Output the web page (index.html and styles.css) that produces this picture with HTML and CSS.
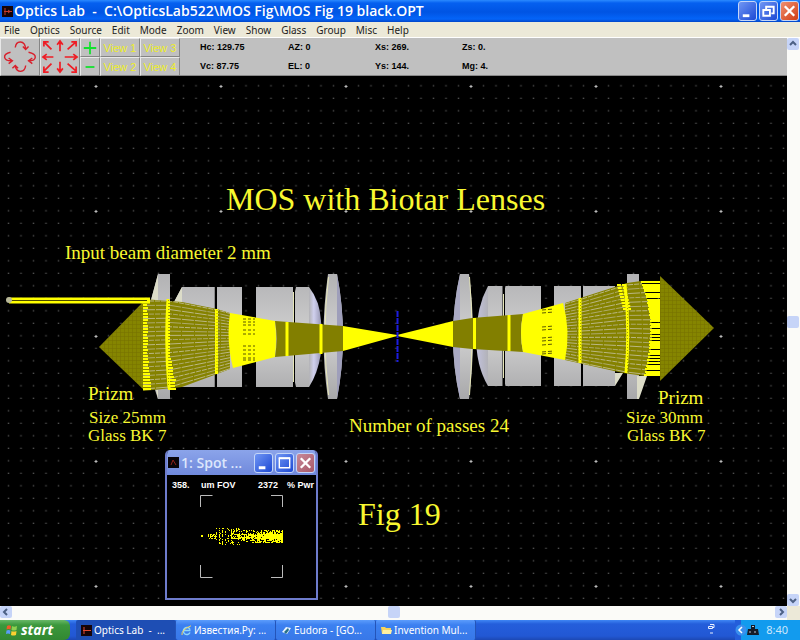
FILE: index.html
```html
<!DOCTYPE html>
<html lang="en">
<head>
<meta charset="utf-8">
<title>Optics Lab</title>
<link rel="stylesheet" href="styles.css">
</head>
<body>
<div class="desktop">
  <header class="titlebar">
    <svg class="app-icon" viewBox="0 0 11 11"><rect width="11" height="11" fill="#160408"/><path d="M3 2v7M2 5.500h8M6 4l2 1.500-2 1.500" stroke="#c43a2c" fill="none"/></svg>
    <h1>Optics Lab&nbsp; -&nbsp; C:\OpticsLab522\MOS Fig\MOS Fig 19 black.OPT</h1>
    <div class="window-buttons">
      <button class="win" aria-label="Minimize"><svg viewBox="0 0 18 18"><path d="M4 14h7" stroke="#fff" stroke-width="3"/></svg></button>
      <button class="win" aria-label="Restore"><svg viewBox="0 0 18 18"><path d="M6.500 7V4.500h8v7H12M6 4.500h9" fill="none" stroke="#fff" stroke-width="2"/><path d="M3.500 8h7v6h-7z" fill="none" stroke="#fff" stroke-width="2"/></svg></button>
      <button class="win close" aria-label="Close"><svg viewBox="0 0 18 18"><path d="M4 4l10 10M14 4L4 14" stroke="#fff" stroke-width="2.500"/></svg></button>
    </div>
  </header>
  <nav class="menu">
    <button>File</button><button>Optics</button><button>Source</button><button>Edit</button><button>Mode</button><button>Zoom</button><button>View</button><button>Show</button><button>Glass</button><button>Group</button><button>Misc</button><button>Help</button>
  </nav>
  <main class="work">
    <section class="toolbar">
      <div class="tools">
        <button class="tall" aria-label="Rotate"><svg viewBox="0 0 40 38" fill="none" stroke="#d8202c" stroke-width="1.500"><path d="M15 9c1-8 10-8 11 1M23 8l3 3 3-3M26 28c-1 8-9 8-11 1M12 31l3-3 3 3M10 14c-9 2-8 9 1 9M8 20l4 3-4 3M29 14c10 2 9 9 0 9M33 20l-4 3 4 3"/></svg></button>
        <button class="tall" aria-label="Pan"><svg viewBox="0 0 40 38" fill="none" stroke="#ee1c24" stroke-width="1.800"><path d="M11 11L3 3M3 8V3h5M20 13V3M17 6l3-4 3 4M28 11l9-8M32 3h5v5M13 19H3M6 16l-4 3 4 3M25 19h12M34 16l4 3-4 3M11 26l-8 8M3 29v6h5M20 24v10M17 31l3 4 3-4M28 26l9 8M32 35h5v-6"/></svg></button>
        <button aria-label="Zoom in"><svg viewBox="0 0 18 18"><path d="M9 2v14M2 9h14" stroke="#12e22c" stroke-width="2"/></svg></button>
        <button>View 1</button>
        <button>View 3</button>
        <button aria-label="Zoom out"><svg viewBox="0 0 18 18"><path d="M4 9h10" stroke="#12e22c" stroke-width="2"/></svg></button>
        <button>View 2</button>
        <button>View 4</button>
      </div>
      <div class="readout">
        <span>Hc: 129.75</span><span>AZ: 0</span><span>Xs: 269.</span><span>Zs: 0.</span>
        <span>Vc: 87.75</span><span>EL: 0</span><span>Ys: 144.</span><span>Mg: 4.</span>
      </div>
    </section>
    <section class="canvas">
      <svg class="drawing" viewBox="0 76 787 530" role="img" aria-label="Optical layout">
        <defs>
          <linearGradient id="glass" x1="0" y1="0" x2="0" y2="1"><stop offset="0" stop-color="#b2b2b4"/><stop offset=".5" stop-color="#d0d0d0"/><stop offset="1" stop-color="#a8a8aa"/></linearGradient>
          <linearGradient id="edge"><stop offset="0" stop-color="#c2c2de"/><stop offset="1" stop-color="#b2b2b8"/></linearGradient>
          <linearGradient id="edge2"><stop offset="0" stop-color="#b2b2b4"/><stop offset=".4" stop-color="#d0d0ee"/><stop offset="1" stop-color="#9898b4"/></linearGradient>
          <pattern id="fine" x="2.250" y="4.750" width="12.500" height="12.500" patternUnits="userSpaceOnUse"><path d="M5.500 6h1.500" stroke="#666"/></pattern>
          <pattern id="coarse" x="33" y="24" width="125" height="125" patternUnits="userSpaceOnUse"><path d="M61.500 62.500h3M63 61v3" stroke="#bbb"/></pattern>
          <pattern id="mesh" x="0" y="0" width="4" height="4" patternUnits="userSpaceOnUse"><rect width="4" height="4" fill="#858500"/><path d="M0 .5h4M.5 0v4" stroke="#777200" stroke-width=".6"/></pattern>
          <clipPath id="fanLeft"><path d="M143 299L182 302 217 309 230 313 230 369 217 374 182 387 143 391z"/></clipPath>
          <clipPath id="fanRight"><path d="M565 303L627 283 641 281q20 47 4 95L623 373 565 360z"/></clipPath>
        </defs>
        <rect y="76" width="787" height="530" fill="#000"/>
        <rect y="76" width="787" height="530" fill="url(#fine)"/>
        <rect y="76" width="787" height="530" fill="url(#coarse)"/>
        <g fill="url(#glass)">
          <path d="M158 274h12v125h-12l-3-9-4-90zM182 287h33v100h-33l-8-85zM217 287h25v100h-25zM256 287h37v100h-37zM295 287h14v100h-14z"/>
          <path d="M328 274h9q12 62 0 125h-9q-9-62 0-125zM460 274h9q8 62 0 125h-9q-14-62 0-125z"/>
          <path d="M488 286h15v100h-15zM505 286h36v100h-36zM554 286h27v100h-27zM583 286h32v100h-32zM627 274h12v125h-12z"/>
        </g>
        <path d="M309 287q11 14 12 34v32q-3 20-12 34z" fill="url(#edge2)"/>
        <path d="M488 286q-11 20-12 50 0 30 12 50z" fill="url(#edge)"/>
        <path d="M337 274q12 62 0 125z" fill="#9e9eba"/>
        <path d="M460 274q-14 62 0 125z" fill="#aaaac4"/>
        <path d="M158 274v26h-7zM182 287v15h-8zM615 386v-13h8zM639 399h-2v-23h10zM156 390h2v9z" fill="#dcdcc8"/>
        <path d="M215.500 287v100M582 286v100" stroke="#000" stroke-width="1.500"/>
        <path d="M293 287h3l-2 9v82l2 9h-3zM502.500 286h3l-2 9v82l2 9h-3z" fill="#000"/>
        <path d="M293.500 292v90M503.500 294v84M328.500 277q-7 58 0 118M469.500 277q5 58 0 118" stroke="#e6e6b8" fill="none"/>
        <path d="M99 347L145 300v91z" fill="url(#mesh)"/>
        <path d="M714 328l-54-52v105z" fill="url(#mesh)"/>
        <path d="M143 299L182 302 217 309 230 313 230 369 217 374 182 387 143 391zM565 303L627 283 641 281q20 47 4 95L623 373 565 360z" fill="#858200"/>
        <g class="rays left" clip-path="url(#fanLeft)"></g>
        <g class="rays right" clip-path="url(#fanRight)"></g>
        <path d="M230 313L275 321q2 18 0 36l-42 11q-7-27-3-55z" fill="#ff0"/>
        <path d="M275 321L343 326v25l-68 6q3-18 0-36z" fill="#827f00"/>
        <path d="M343 326L397 335l56-14v26l-56-11-54 15z" fill="#ff0"/>
        <path d="M453 321L472 318 523 314q-4 19 0 38L472 349 453 347z" fill="#827f00"/>
        <path d="M523 314L563 303q8 28 2 57l-42-8q-4-19 0-38z" fill="#ff0"/>
        <g fill="none" stroke="#ff0" stroke-width="3">
          <path d="M168 299q-3 45 1 89M216.500 309v65M287 322v34M321 324v30M474.500 318v31M509 315v36M580 298v65M625 284q5 44 1 89"/>
        </g>
        <g fill="none" stroke="#a8a400" stroke-dasharray="1 2"><path d="M168.500 300v87M217 310v63M580.500 299v63M627.500 284v88"/></g>
        <g class="combs"></g>
        <g class="ticks"></g>
        <path d="M397.500 311v51" stroke="#1c1ce0" stroke-width="2" stroke-dasharray="6 1"/>
        <path d="M9 300.500h141" stroke="#ff0" stroke-width="6"/><path d="M11 300.500h136" stroke="#4c4a00" stroke-width="1"/>
        <circle cx="9" cy="300" r="3" fill="#b8b898"/>
        <g class="labels">
          <text x="226" y="210" class="t-title">MOS with Biotar Lenses</text>
          <text x="65" y="259" class="t-mid">Input beam diameter 2 mm</text>
          <text x="88" y="400" class="t-mid">Prizm</text>
          <text x="89" y="423" class="t-small">Size 25mm</text>
          <text x="88" y="441" class="t-small">Glass BK 7</text>
          <text x="349" y="432" class="t-mid">Number of passes 24</text>
          <text x="658" y="404" class="t-mid">Prizm</text>
          <text x="626" y="423" class="t-small">Size 30mm</text>
          <text x="627" y="441" class="t-small">Glass BK 7</text>
          <text x="358" y="525" class="t-title">Fig 19</text>
        </g>
      </svg>
      <section class="spot">
        <header>
          <svg class="app-icon" viewBox="0 0 11 11"><rect width="11" height="11" fill="#080408"/><path d="M3 8l2-5 3 5" stroke="#8e2018" fill="none"/></svg>
          <h2>1: Spot ...</h2>
          <button class="win" aria-label="Minimize"><svg viewBox="0 0 18 18"><path d="M4 14h7" stroke="#fff" stroke-width="3"/></svg></button>
          <button class="win" aria-label="Maximize"><svg viewBox="0 0 18 18"><path d="M3.500 4h11v10h-11z" fill="none" stroke="#fff" stroke-width="1.500"/><path d="M3 4h12" stroke="#fff" stroke-width="2"/></svg></button>
          <button class="win close" aria-label="Close"><svg viewBox="0 0 18 18"><path d="M4 4l10 10M14 4L4 14" stroke="#fff" stroke-width="2.500"/></svg></button>
        </header>
        <div class="spot-data"><span>358.</span><span>um FOV</span><span>2372</span><span>% Pwr</span></div>
        <svg class="spot-plot" viewBox="167 495 149 103"><path d="M200.500 507v-11.500h12M271 495.500h11.500V507M200.500 565v12.500h12M271 577.500h11.500V565" stroke="#bbb" fill="none"/><g class="spots" fill="#ff0"></g></svg>
      </section>
    </section>
    <div class="vscroll"><button aria-label="Scroll up"><svg viewBox="0 0 12 12"><path d="M3 7l3-3 3 3" class="chev"/></svg></button><button class="thumb" aria-label="Vertical thumb"></button><button aria-label="Scroll down"><svg viewBox="0 0 12 12"><path d="M3 5l3 3 3-3" class="chev"/></svg></button></div>
    <div class="hscroll"><button aria-label="Scroll left"><svg viewBox="0 0 12 12"><path d="M7 3L4 6l3 3" class="chev"/></svg></button><button class="thumb" aria-label="Horizontal thumb"></button><button aria-label="Scroll right"><svg viewBox="0 0 12 12"><path d="M5 3l3 3-3 3" class="chev"/></svg></button></div>
  </main>
  <footer class="taskbar">
    <button class="start"><svg viewBox="0 0 12 12"><path d="M1 2q2-1.500 4 0L4.500 5.500q-2-1-4 0z" fill="#f0592a"/><path d="M6 2q2 1.500 5 0l-.5 4q-3 1-5 0z" fill="#8fd050"/><path d="M.5 6.500q2-1 4 0L4 10q-2-1-4 0z" fill="#5a9cf8"/><path d="M5.500 7q2 1 5 0L10 11q-3 1-5 0z" fill="#fbd030"/></svg>start</button>
    <div class="tasks">
      <button class="active"><svg viewBox="0 0 11 11"><rect width="11" height="11" fill="#160408"/><path d="M3 2v7M2 5.500h8" stroke="#e04a34" fill="none"/></svg><span>Optics Lab&nbsp; -&nbsp; ...</span></button>
      <button><svg viewBox="0 0 11 11"><path d="M9 4.500a3.500 3.500 0 1 0 0 3M3 5.500h6.500" fill="none" stroke="#8cd8ff" stroke-width="1.500"/><path d="M1 10Q0 5 10 .8" fill="none" stroke="#f4d45c"/></svg><span>Известия.Ру: ...</span></button>
      <button><svg viewBox="0 0 11 11"><path d="M1 7l4-5 5 1-4 6z" fill="#e8f4ff"/><path d="M3 7l4-4 1 2-3 4z" fill="#287088"/></svg><span>Eudora - [GO...</span></button>
      <button><svg viewBox="0 0 11 11"><path d="M0 2h4l1 1h5v6H1z" fill="#f6d45c"/><path d="M2 5h9l-1 4H1z" fill="#fff0a0"/></svg><span>Invention Mul...</span></button>
    </div>
    <svg class="lang" viewBox="0 0 8 12"><path d="M3 1.500h4v3H5M1.500 3.500h4v2h-4zM3 10h3" fill="none" stroke="#e8f0ff"/></svg>
    <div class="tray">
      <button aria-label="Show hidden icons"><svg viewBox="0 0 12 12"><circle cx="6" cy="6" r="5.500" fill="#3a90ee"/><path d="M7 3L4 6l3 3" stroke="#fff" stroke-width="1.500" fill="none"/></svg></button>
      <svg viewBox="0 0 12 12"><path d="M4 1h4v4h3l1 6H0l1-6h3z" fill="#151b28"/><path d="M5 2.500h2M2 8h2M7 8h2" stroke="#b8c8dc"/></svg>
      <time>8:40</time>
    </div>
  </footer>
</div>
<script src="app.js"></script>
</body>
</html>
```

FILE: app.js
```js
const NS = "http://www.w3.org/2000/svg";
// Repeatable pseudo-random sequence, so each load traces the same rays.
let seed = 7;
const rnd = () => (seed = (seed * 16807) % 2147483647) / 2147483647;

function stroke(parent, d, color, width, dash) {
  const p = document.createElementNS(NS, "path");
  p.setAttribute("d", d);
  p.setAttribute("fill", "none");
  p.setAttribute("stroke", color);
  p.setAttribute("stroke-width", width);
  if (dash) p.setAttribute("stroke-dasharray", dash);
  parent.append(p);
}

const left = document.querySelector(".rays.left");
const right = document.querySelector(".rays.right");
for (let i = 0; i <= 20; i++) {
  const t = i / 20;
  const color = i % 2 ? "#b8b488" : "#c8c4a4";
  const dash = i % 3 ? "12 1" : "5 1";
  stroke(left, `M143 ${301 + 88 * t}L170 ${301 + 86 * t} 217 ${310 + 63 * t} 232 ${314 + 54 * t}`, color, 0.8, dash);
  stroke(right, `M565 ${304 + 55 * t}L582 ${299 + 64 * t} 626 ${285 + 87 * t} 652 ${283 + 92 * t}`, color, 0.8, dash);
}

const combs = document.querySelector(".combs");
for (let y = 302; y < 390; y += 3) {
  const low = Math.max(0, (y - 355) / 9);
  stroke(combs, `M143 ${y}h${4 + Math.round(low + rnd())}`, "#ff0", 2);
  stroke(combs, `M${167 + (y > 360 ? 1 : 0)} ${y}h${3 + Math.round(low * (1 + rnd()))}`, "#ff0", 2);
}
// Teeth between the curved lens face and the prism, longest at the rims.
for (let y = 282; y < 376; y += 3) {
  const bow = Math.round(9 * (1 - ((y - 329) / 47) ** 2));
  const start = (y < 329 ? 641 : 644) + bow - (y < 329 ? 0 : Math.round(bow / 3));
  stroke(combs, `M${start} ${y}H660`, "#ff0", 2);
  if (rnd() > 0.5) stroke(combs, `M${start + 1} ${y + 1.5}H660`, "#ff0", 1);
}
for (let y = 285; y < 312; y += 3) stroke(combs, `M${617 + (y - 285) / 4} ${y}h8`, "#ff0", 2, "4 1");

const ticks = document.querySelector(".ticks");
for (const y of [319, 322, 325, 330, 334, 346, 350, 354, 358, 360]) stroke(ticks, `M243 ${y}h12`, "#5c5800", 1, "3 2");
for (const y of [310, 313, 327, 330, 338, 341, 345, 352, 354]) stroke(ticks, `M542 ${y}l12 -1`, "#5c5800", 1, "4 2");

const spots = document.querySelector(".spots");
function dot(x, y) {
  const r = document.createElementNS(NS, "rect");
  r.setAttribute("x", x);
  r.setAttribute("y", y);
  r.setAttribute("width", 1);
  r.setAttribute("height", 1);
  spots.append(r);
}
for (const [x, y] of [[201, 535], [202, 535], [201, 536], [202, 536]]) dot(x, y);
for (let x = 208; x < 283; x++) {
  const half = x < 216 ? 2 : x < 240 ? 8 : 6;
  const density = x < 216 ? 0.6 : x < 232 ? (x % 3 ? 0.06 : 0.55) : 0.2 + (x - 232) / 90;
  for (let y = 536 - half; y <= 536 + half; y++) {
    const core = x > 230 && Math.abs(y - 536) < 3 ? 0.4 : 0;
    if (rnd() < density + core) dot(x, y);
  }
}
```

FILE: styles.css
```css
* { box-sizing: border-box; }
body { margin: 0; background: #000; font-family: "Liberation Sans", Arial, sans-serif; font-size: 11px; }
button { margin: 0; padding: 0; border: 0; background: none; font: inherit; color: inherit; }
h1, h2 { margin: 0; white-space: nowrap; }
svg { display: block; flex: none; }
.desktop { display: flex; flex-direction: column; height: 100vh; overflow: hidden; }

.titlebar { display: flex; align-items: center; height: 22px; padding: 0 1px 0 2px; gap: 1px; background: linear-gradient(#2b8aff 0, #0560f0 3px, #0054e3 12px, #0464f8 19px, #0346c8); }
.titlebar h1 { flex: 1; color: #fff; font: 600 14px/22px "Open Sans", sans-serif; }
.app-icon { width: 11px; height: 11px; }
.window-buttons { display: flex; gap: 2px; }
.win { width: 19px; height: 20px; border: 1px solid #c4d6f8; border-radius: 3px; background: linear-gradient(135deg, #7096f4, #1c48d4); }
.win svg { width: 100%; height: 100%; }
.win.close { background: linear-gradient(135deg, #f09070, #d03c14); }

.menu { display: flex; gap: 10px; height: 16px; padding-left: 4px; background: #ece9d8; border-bottom: 1px solid #fff; color: #222; font: 10px/14px "Noto Sans", sans-serif; }

.work { flex: 1; min-height: 0; display: grid; grid-template: 38px minmax(0, 1fr) 14px / minmax(0, 1fr) 13px; background: #ece9d8; }
.toolbar { display: flex; gap: 20px; background: #c0c0c0; border-bottom: 1px solid #888; }
.tools { display: grid; grid-template: 19px 19px / 40px 40px 20px 40px 40px; }
.tools button { display: grid; place-items: center; border: 1px solid; border-color: #e8e8e8 #858585 #858585 #e8e8e8; color: #eeee28; font-size: 11px; line-height: 12px; }
.tools .tall { grid-row: span 2; }
.tools .tall svg { width: 38px; height: 36px; }
.tools svg { width: 16px; height: 16px; }
.readout { display: grid; grid-template: 18px 20px / 88px 87px 87px 87px; align-items: center; font-size: 9px; font-weight: bold; color: #000; }

.canvas { position: relative; grid-area: 2 / 1; background: #000; overflow: hidden; }
.drawing { width: 100%; height: 100%; }
.labels { fill: #f8f830; font-family: "Liberation Serif", "Times New Roman", serif; }
.t-title { font-size: 32px; }
.t-mid { font-size: 19px; }
.t-small { font-size: 17px; }

.spot { position: absolute; left: 165px; bottom: 6px; width: 153px; height: 150px; border: 2px solid #6e7ccc; border-top: 0; border-radius: 5px 5px 0 0; background: #000; overflow: hidden; }
.spot header { display: flex; align-items: center; gap: 2px; height: 25px; padding: 0 1px; background: linear-gradient(#8ba4ea, #7089dc); }
.spot h2 { flex: 1; color: #dce6fc; font: 600 14px/24px "Open Sans", sans-serif; }
.spot .win.close { background: linear-gradient(135deg, #c88a9a, #a85868); }
.spot-data { display: grid; grid-template-columns: 29px 57px 29px 1fr; height: 20px; padding-left: 5px; color: #fff; font-size: 9px; font-weight: bold; line-height: 20px; white-space: nowrap; }
.spot-plot { width: 100%; height: 103px; }

.vscroll, .hscroll { display: flex; justify-content: space-between; background: #fbfbf8; }
.vscroll { grid-area: 1 / 2 / 3 / 3; flex-direction: column; }
.hscroll { grid-area: 3 / 1; }
.vscroll button, .hscroll button { width: 12px; height: 12px; border-radius: 2px; background: #c6d4f8; }
.chev { fill: none; stroke: #4d6185; stroke-width: 2; }

.taskbar { display: flex; height: 20px; background: linear-gradient(#3f86f4, #245edb 4px, #2258d4 16px, #1c48b4); color: #fff; font: 11px/18px "Noto Sans", sans-serif; }
.start { display: flex; align-items: center; gap: 3px; width: 70px; padding-left: 6px; border-radius: 0 6px 6px 0; background: linear-gradient(#68b868, #3c983c 5px, #328832); font: italic bold 14px/18px "Open Sans", sans-serif; }
.start svg { width: 12px; height: 12px; }
.tasks { display: flex; flex: 1; min-width: 0; padding-left: 6px; }
.tasks button { display: flex; align-items: center; gap: 2px; flex: 0 1 100px; min-width: 0; padding-left: 5px; border-radius: 2px; border-right: 1px solid #2454b8; background: linear-gradient(#5c9cfc, #3c80f0 5px, #3878e8); font-size: 10px; white-space: nowrap; }
.tasks .active { background: #1e4eb4; }
.tasks svg { width: 11px; height: 11px; }
.lang { width: 8px; height: 12px; margin: 3px 20px 0 0; }
.tray { display: flex; align-items: center; gap: 0; padding-right: 12px; background: linear-gradient(90deg, #245edb 6px, #129bee 6px); }
.tray svg { width: 12px; height: 12px; }
.tray time { padding-left: 7px; color: #cce6fc; }
```
